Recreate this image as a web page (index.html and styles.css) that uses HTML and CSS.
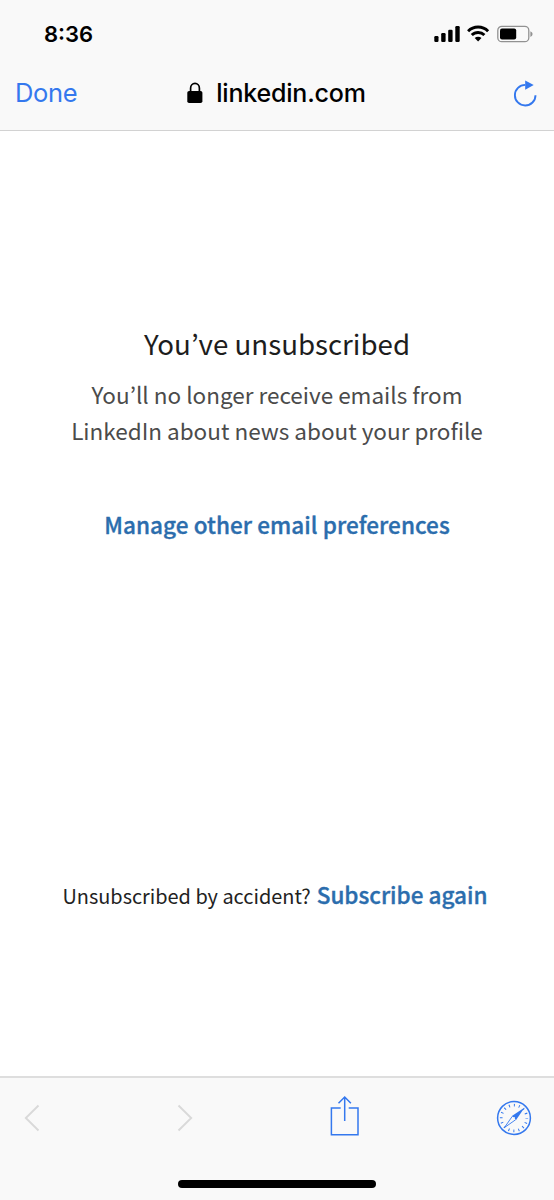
FILE: index.html
```html
<!DOCTYPE html>
<html lang="en">
<head>
<meta charset="utf-8">
<meta name="viewport" content="width=device-width">
<title>Unsubscribed</title>
<link rel="stylesheet" href="styles.css">
</head>
<body>
<header class="browser-header">
  <div class="status-bar">
    <span class="time">8:36</span>
    <svg class="status-icons" width="100" height="18" viewBox="0 0 100 18">
      <rect x="0.3" y="11" width="4.2" height="6" rx="1.2"/>
      <rect x="7.2" y="8" width="4.4" height="9" rx="1.2"/>
      <rect x="14.2" y="4.7" width="4.4" height="12.3" rx="1.2"/>
      <rect x="21.3" y="1.1" width="4.4" height="15.9" rx="1.2"/>
      <g fill="none" stroke="#000" stroke-width="2.9">
        <path d="M34.1 6.2a14 14 0 0 1 20 0"/>
        <path d="M37.8 10.1a8.8 8.8 0 0 1 12.6 0"/>
      </g>
      <path d="M40.7 13.1a4.9 4.9 0 0 1 6.8 0L44.1 16.5z"/>
      <rect x="63.8" y="1.4" width="31" height="15.3" rx="4" fill="none" stroke="#929292" stroke-width="1.3"/>
      <rect x="66" y="3.6" width="16.2" height="10.9" rx="2"/>
      <path d="M96.4 6.2q2.2 1 2.2 2.9t-2.2 2.9z" fill="#929292"/>
    </svg>
  </div>
  <nav class="address-bar">
    <a class="done">Done</a>
    <div class="address">
      <svg class="lock" width="16" height="22" viewBox="0 0 16 22">
        <path d="M3.6 10V6.2a4.4 4.8 0 0 1 8.8 0V10" fill="none" stroke="#000" stroke-width="1.7"/>
        <rect x="0.3" y="9" width="15.1" height="12.1" rx="1.8"/>
      </svg>
      <span class="domain">linkedin.com</span>
    </div>
    <svg class="reload" width="26" height="28" viewBox="0 0 26 28">
      <path d="M12.3 4.9A10.3 10.3 0 1 0 22.5 15.2" fill="none" stroke="#3478ee" stroke-width="1.9"/>
      <path d="M12.2 0.6 20.7 5.1 12.2 9.7z" fill="#3478ee"/>
    </svg>
  </nav>
</header>
<main class="page">
  <h1 class="title">You’ve unsubscribed</h1>
  <p class="message">You’ll no longer receive emails from<br>LinkedIn about news about your profile</p>
  <a class="manage">Manage other email preferences</a>
  <p class="resubscribe"><span class="question">Unsubscribed by accident?</span><a class="again">Subscribe again</a></p>
</main>
<footer class="toolbar">
  <div class="tools">
    <svg class="chevron" width="16" height="28" viewBox="0 0 16 28"><path d="M14.5 1.5 1.8 14l12.7 12.5" /></svg>
    <svg class="chevron" width="16" height="28" viewBox="0 0 16 28"><path d="M1.5 1.5 14.2 14 1.5 26.5" /></svg>
    <svg class="blue-icon share" width="30" height="42" viewBox="-0.7 0 30 42">
      <path d="M11 13H1.7v26.7h26.6V13H19M15 26V2M8.8 8.2 15 2l6.2 6.2"/>
    </svg>
    <svg class="blue-icon" width="36" height="36" viewBox="-18 -18 36 36">
      <circle r="16.4"/>
      <circle r="12.8" stroke-width="2.7" stroke-dasharray="1 4.027" stroke-dashoffset="0.5"/>
      <path d="M10.6-10.6-2.1-2.1 2.1 2.1z" fill="#3478ee" stroke="none"/>
      <path d="M-1.7-1.7-9.6 9.6 1.7 1.7" stroke-width="0.9"/>
      <circle r="1" fill="#f9f9f9" stroke="none"/>
    </svg>
  </div>
  <div class="home-indicator"></div>
</footer>
</body>
</html>
```
FILE: styles.css
```css
* { box-sizing: border-box; }
body {
  margin: 0;
  height: 1200px;
  display: flex;
  flex-direction: column;
  background: #fff;
  font-family: "Noto Sans CJK KR", sans-serif;
  overflow: hidden;
}
.browser-header {
  height: 131px;
  background: #f9f9f9;
  border-bottom: 1px solid #d2d2d2;
  font-family: Inter, sans-serif;
}
.status-bar {
  height: 68px;
  padding: 0 20px 0 44px;
  display: flex;
  justify-content: space-between;
  align-items: center;
}
.time { font-size: 22px; font-weight: 600; }
.address-bar {
  height: 50px;
  padding: 0 15px 0 14px;
  display: grid;
  grid-template-columns: 100px 1fr 100px;
  align-items: center;
}
.done { color: #3478ee; font-size: 25.5px; letter-spacing: -0.3px; padding: 0 0 2px 1px; }
.address { display: flex; justify-content: center; align-items: center; gap: 13px; }
.domain { font-size: 25px; font-weight: 500; letter-spacing: -0.2px; }
.reload { justify-self: end; margin-top: 2px; }
.page {
  flex: 1;
  display: flex;
  flex-direction: column;
  align-items: center;
  text-align: center;
  padding-top: 192px;
}
.title {
  margin: 0;
  font-size: 27.7px;
  line-height: 40px;
  font-weight: 400;
  color: #1d1d1d;
}
.message {
  margin: 13px 0 0;
  font-size: 22.5px;
  line-height: 36px;
  color: #4b4b4b;
  white-space: nowrap;
}
.manage {
  margin-top: 58px;
  font-size: 22.5px;
  line-height: 36px;
  font-weight: 500;
  letter-spacing: 0.06px;
  color: #2b6dad;
  -webkit-text-stroke: 0.35px #2b6dad;
}
.resubscribe {
  margin: 334px 4px 0 0;
  display: flex;
  align-items: baseline;
  gap: 6px;
  line-height: 36px;
  white-space: nowrap;
}
.question { font-size: 19.9px; color: #222; }
.again {
  font-size: 22.5px;
  font-weight: 500;
  color: #2b6dad;
  -webkit-text-stroke: 0.35px #2b6dad;
}
.toolbar {
  height: 124px;
  background: #f9f9f9;
  border-top: 2px solid #dedede;
}
.tools {
  height: 80px;
  padding: 0 22px 0 24px;
  display: flex;
  justify-content: space-between;
  align-items: center;
}
.chevron path { fill: none; stroke: #d9d9d9; stroke-width: 1.9; }
.blue-icon { fill: none; stroke: #3478ee; stroke-width: 1.5; }
.share { margin-bottom: 4px; }
.home-indicator {
  width: 198px;
  height: 8px;
  margin: 22px auto 0;
  border-radius: 4px;
  background: #000;
}
```
